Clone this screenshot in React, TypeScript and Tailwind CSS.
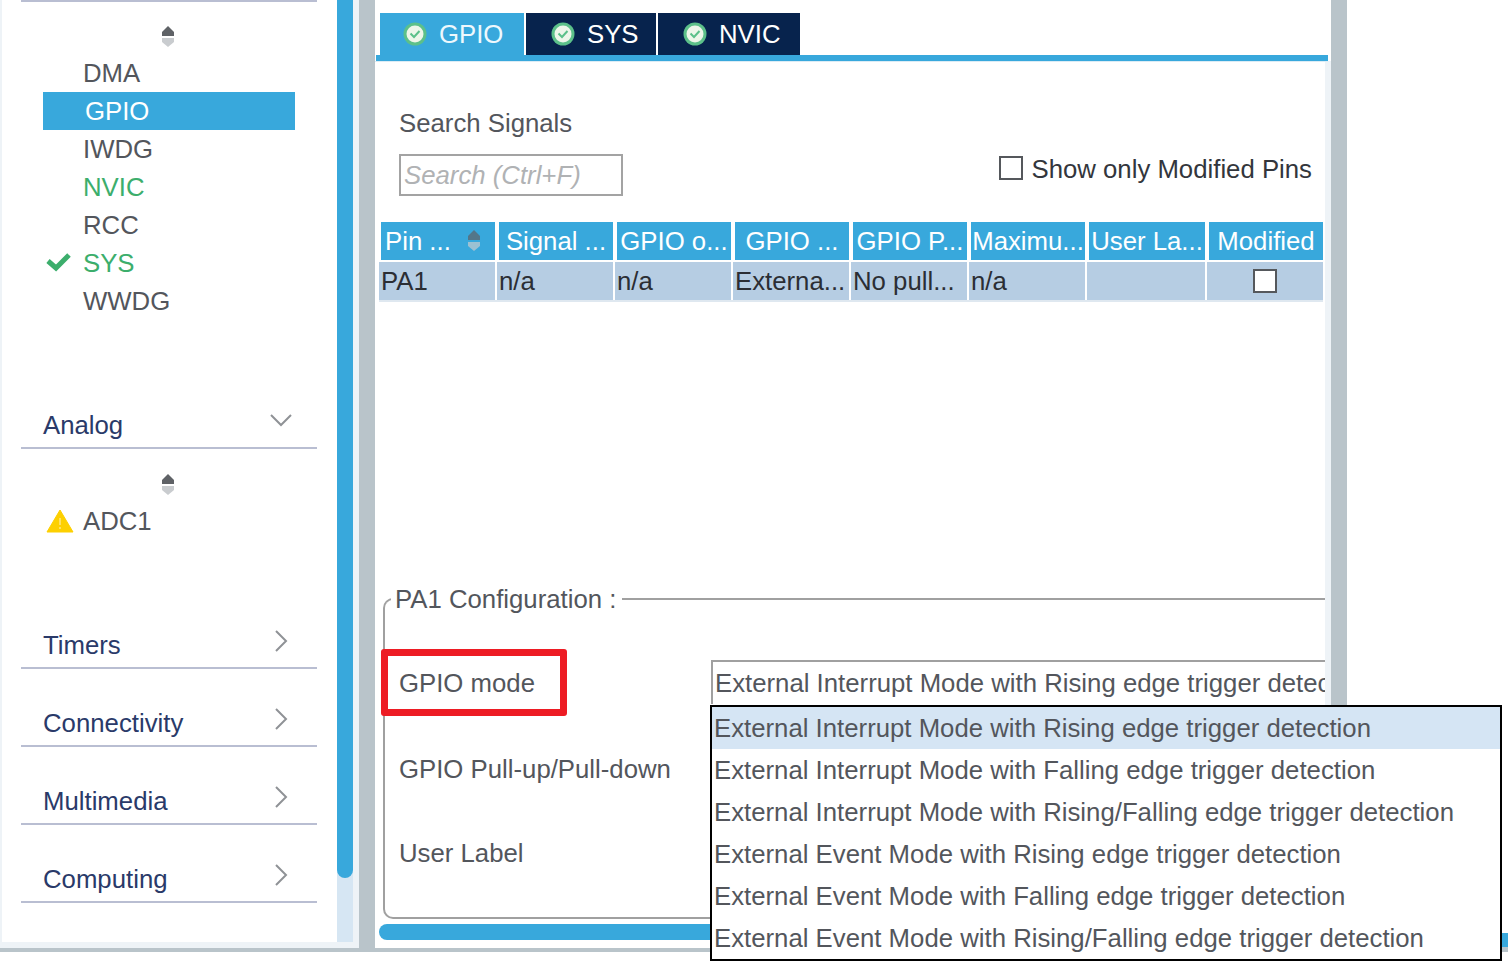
import React from 'react';

const peripherals = [
  { name: 'DMA', color: 'text-[#53565c]' },
  { name: 'GPIO', color: 'text-white', selected: true },
  { name: 'IWDG', color: 'text-[#53565c]' },
  { name: 'NVIC', color: 'text-[#3cae6c]' },
  { name: 'RCC', color: 'text-[#53565c]' },
  { name: 'SYS', color: 'text-[#3cae6c]', checked: true },
  { name: 'WWDG', color: 'text-[#53565c]' },
];

const headers = ['Pin ...', 'Signal ...', 'GPIO o...', 'GPIO ...', 'GPIO P...', 'Maximu...', 'User La...', 'Modified'];
const cells = ['PA1', 'n/a', 'n/a', 'Externa...', 'No pull...', 'n/a', ''];

const modes = [
  'External Interrupt Mode with Rising edge trigger detection',
  'External Interrupt Mode with Falling edge trigger detection',
  'External Interrupt Mode with Rising/Falling edge trigger detection',
  'External Event Mode with Rising edge trigger detection',
  'External Event Mode with Falling edge trigger detection',
  'External Event Mode with Rising/Falling edge trigger detection',
];

const SortIcon = () => (
  <svg width="16" height="22" viewBox="0 0 16 22">
    <path d="M8 0 L14 6 V10 H2 V6 Z" fill="#5f6266" />
    <path d="M2 12 H14 V16 L8 21 L2 16 Z" fill="#c9cccf" />
  </svg>
);

const TabCheck = () => (
  <svg width="24" height="24" viewBox="0 0 24 24">
    <circle cx="12" cy="12" r="11.5" fill="#5cc08a" />
    <circle cx="12" cy="12" r="8.5" fill="#eef6ea" />
    <path d="M7.5 11.5 L11 15 L16.5 9" fill="none" stroke="#5cc08a" strokeWidth="2" />
  </svg>
);

const Group = ({ name, open }: { name: string; open?: boolean }) => (
  <div className={`flex h-[42px] items-center justify-between border-b-2 border-[#b9bed2] pl-[22px] text-[#2a3a69] ${open ? 'pr-[25px]' : 'pr-[29px]'}`}>
    <span className="translate-y-[-2px]">{name}</span>
    {open ? (
      <svg className="translate-y-[-7px]" width="22" height="13" viewBox="0 0 22 13">
        <path d="M1 1 L11 11 L21 1" fill="none" stroke="#8f9296" strokeWidth="2" />
      </svg>
    ) : (
      <svg className="translate-y-[-6px]" width="14" height="22" viewBox="0 0 14 22">
        <path d="M2 1 L12 11 L2 21" fill="none" stroke="#8f9296" strokeWidth="2" />
      </svg>
    )}
  </div>
);

export default function App() {
  return (
    <div className="relative flex h-[970px] w-[1508px] overflow-hidden bg-white font-['Liberation_Sans',sans-serif] text-[25.75px] text-[#53565c]">
      {/* Panneau gauche */}
      <aside className="flex h-[952px] w-[375px] flex-col">
        <div className="flex h-[948px]">
          <div className="flex w-[359px] flex-col">
            <div className="flex h-[942px]">
              <nav className="w-[337px] border-l-2 border-[#eef3f7]">
                <div className="ml-[19px] mr-[20px] h-[2px] bg-[#b9bed2]" />
                <div className="flex justify-center pt-[24px] pr-[4px]"><SortIcon /></div>
                <ul className="mt-[6px] ml-[41px] mr-[42px]">
                  {peripherals.map((p) => (
                    <li key={p.name} className={`relative flex h-[38px] items-center ${p.selected ? 'bg-[#38a8dc] pl-[42px]' : 'pl-[40px]'} ${p.color}`}>
                      {p.checked && (
                        <svg className="absolute left-[2px] top-[8px]" width="26" height="20" viewBox="0 0 26 20">
                          <path d="M3 9 L11 16 L24 3" fill="none" stroke="#3cae6c" strokeWidth="5" />
                        </svg>
                      )}
                      {p.name}
                    </li>
                  ))}
                </ul>
                <div className="ml-[19px] mr-[20px] mt-[87px]"><Group name="Analog" open /></div>
                <div className="flex justify-center pt-[25px] pr-[4px]"><SortIcon /></div>
                <div className="ml-[44px] mt-[6px] flex h-[38px] items-center gap-[9px]">
                  <svg width="28" height="24" viewBox="0 0 28 24">
                    <path d="M14 1 L27 23 H1 Z" fill="#fdd000" stroke="#fdd000" strokeLinejoin="round" />
                    <path d="M14 9 V16 M14 18 V20" stroke="#ffe680" strokeWidth="1.5" />
                  </svg>
                  ADC1
                </div>
                <div className="ml-[19px] mr-[20px] mt-[87px] flex flex-col gap-[36px]">
                  <Group name="Timers" />
                  <Group name="Connectivity" />
                  <Group name="Multimedia" />
                  <Group name="Computing" />
                </div>
              </nav>
              <div className="flex w-[16px] flex-col bg-[#d6e6f3]">
                <div className="h-[878px] rounded-b-[8px] bg-[#38a8dc]" />
              </div>
              <div className="flex-1 bg-[#eef3f7]" />
            </div>
            <div className="h-[6px] bg-[#eef3f7]" />
          </div>
          <div className="w-[16px] bg-[#b9c4ca]" />
        </div>
        <div className="h-[4px] bg-[#b9c4ca]" />
      </aside>

      {/* Panneau principal */}
      <main className="flex h-[952px] w-[972px]">
        <div className="flex w-[956px] flex-col">
          <div className="flex h-[55px] items-end gap-[2px] pl-[5px]">
            <div className="flex h-[42px] w-[144px] items-center gap-[12px] bg-[#38a8dc] pl-[23px] text-[#eef8fd]"><TabCheck />GPIO</div>
            <div className="flex h-[42px] w-[130px] items-center gap-[12px] bg-[#07234d] pl-[25px] text-white"><TabCheck />SYS</div>
            <div className="flex h-[42px] w-[142px] items-center gap-[12px] bg-[#07234d] pl-[25px] text-white"><TabCheck />NVIC</div>
          </div>
          <div className="ml-[1px] mr-[3px] h-[6px] bg-[#38a8dc]" />
          <div className="flex flex-1 flex-col border-r-[6px] border-[#eef3f7] border-t border-t-[#dcecf5]">
            <div className="flex h-[160px] justify-between pl-[24px] pr-[13px] pt-[46px]">
              <div>
                <div className="leading-[30px]">Search Signals</div>
                <div className="mt-[16px] flex h-[42px] w-[224px] items-center border-2 border-[#a3a3a3] pl-[3px] pt-[1px] italic text-[#b0b2b4]">Search (Ctrl+F)</div>
              </div>
              <label className="mt-[45px] flex h-[30px] items-center gap-[8px] text-[#33363c]">
                <span className="h-[24px] w-[24px] border-2 border-[#55585c]" />
                <span className="translate-y-[1px]">Show only Modified Pins</span>
              </label>
            </div>
            <div className="ml-[6px] grid h-[40px] grid-cols-[118px_118px_118px_118px_118px_118px_120px_114px]">
              {headers.map((h, i) => (
                <div key={h} className={`flex h-[38px] items-center overflow-hidden whitespace-nowrap bg-[#38a8dc] text-white ${i === 0 ? 'mr-[4px] justify-between pl-[4px]' : i === 7 ? 'justify-center' : 'mr-[4px] justify-center'}`}>
                  {h}
                  {i === 0 && <span className="mr-[13px] opacity-70"><SortIcon /></span>}
                </div>
              ))}
            </div>
            <div className="ml-[4px] grid h-[38px] w-[944px] grid-cols-[118px_118px_118px_118px_118px_118px_120px_116px]">
              {cells.map((c, i) => (
                <div key={i} className="mr-[2px] flex items-center whitespace-nowrap bg-[#b6cde3] pl-[2px] text-[#2b2e34]">{c}</div>
              ))}
              <div className="flex items-center justify-center bg-[#b6cde3]">
                <span className="h-[24px] w-[24px] border-2 border-[#55585c] bg-white" />
              </div>
            </div>
            <div className="ml-[4px] h-[2px] w-[944px] bg-[#dfe8f0]" />

            <fieldset className="ml-[8px] mt-[282px] h-[335px] rounded-l-[10px] border-2 border-r-0 border-[#a0a0a0]">
              <legend className="ml-[6px] px-[4px] pr-[6px] leading-[30px]">PA1 Configuration :</legend>
              <div className="flex pl-[14px] pt-[47px]">
                <div className="w-[312px]">
                  <div className="flex h-[44px] items-center">GPIO mode</div>
                  <div className="mt-[42px] flex h-[44px] items-center">GPIO Pull-up/Pull-down</div>
                  <div className="mt-[40px] flex h-[44px] items-center">User Label</div>
                </div>
                <div className="-mt-[1px] flex h-[44px] w-[614px] items-center overflow-hidden whitespace-nowrap border-l-2 border-t-2 border-[#a0a0a0] pl-[2px]">{modes[0]}</div>
              </div>
            </fieldset>
            <div className="ml-[4px] mt-[5px] h-[16px] rounded-l-[8px] bg-[#38a8dc]" />
            <div className="flex-1" />
          </div>
          <div className="h-[4px] bg-[#b9c4ca]" />
        </div>
        <div className="w-[16px] bg-[#b9c4ca]" />
      </main>

      {/* Annotation rouge */}
      <div className="absolute left-[381px] top-[649px] h-[67px] w-[186px] rounded-[3px] border-[7px] border-[#ed1c24]" />

      {/* Liste déroulante ouverte */}
      <ul className="absolute left-[710px] top-[705px] z-10 h-[256px] w-[792px] border-2 border-black bg-white">
        {modes.map((m, i) => (
          <li key={m} className={`flex h-[42px] items-center whitespace-nowrap pl-[2px] ${i === 0 ? 'bg-[#d5e5f4]' : ''}`}>{m}</li>
        ))}
      </ul>
      <div className="absolute right-0 top-[933px] flex h-[19px] w-[6px] flex-col">
        <div className="h-[14px] bg-[#38a8dc]" />
        <div className="h-[5px] bg-[#b9c4ca]" />
      </div>
    </div>
  );
}
